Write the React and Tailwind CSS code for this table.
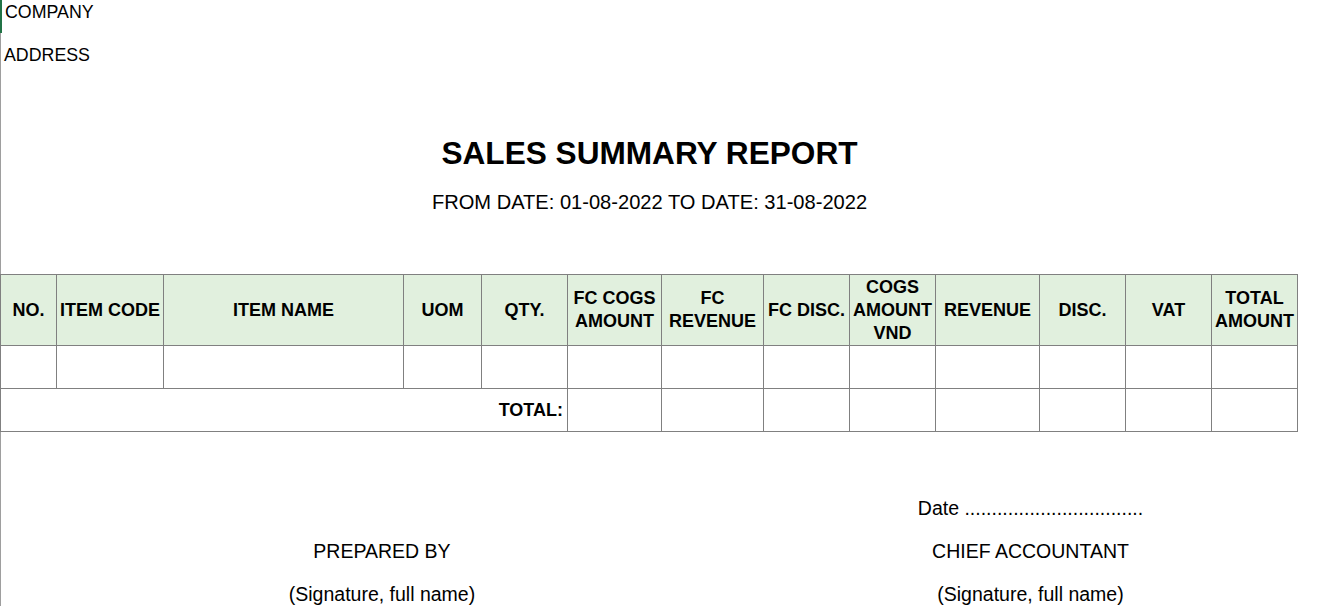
import React from 'react';

const cols = [
  { label: 'NO.' },
  { label: 'ITEM CODE' },
  { label: 'ITEM NAME' },
  { label: 'UOM' },
  { label: 'QTY.' },
  { label: 'FC COGS AMOUNT' },
  { label: 'FC REVENUE' },
  { label: 'FC DISC.' },
  { label: 'COGS AMOUNT VND' },
  { label: 'REVENUE' },
  { label: 'DISC.' },
  { label: 'VAT' },
  { label: 'TOTAL AMOUNT' },
];

const App = () => {
  return (
    <div
      className="min-h-screen w-full bg-white text-black text-[17.8px]"
      style={{ fontFamily: '"Liberation Sans", Arial, sans-serif' }}
    >
      {/* Company row (selected cell marker) */}
      <div className="h-[33px] border-l-2 border-[#217346] pl-[3px] leading-[24px]">COMPANY</div>

      <div className="border-l border-[#9e9e9e] w-[1298px]">
        <div className="pl-[3px] pt-[10px] leading-[24px]">ADDRESS</div>

        {/* Title */}
        <div className="mt-[68px] text-center font-bold text-[31.6px] leading-[36px]">SALES SUMMARY REPORT</div>
        <div className="mt-[19px] text-center text-[20.1px] leading-[24px]">
          FROM DATE: 01-08-2022 TO DATE: 31-08-2022
        </div>

        {/* Table */}
        <div className="mt-[60px] -ml-px grid grid-cols-[56px_107px_240px_78px_86px_94px_102px_86px_86px_104px_86px_86px_86px] border-l border-t border-[#808080]">
          {cols.map((c) => (
            <div
              key={c.label}
              className="h-[71px] bg-[#e1f0de] border-r border-b border-[#808080] flex items-center justify-center text-center font-bold text-[18px] leading-[23px]"
            >
              {c.label}
            </div>
          ))}
          {cols.map((c) => (
            <div key={'r' + c.label} className="h-[43px] border-r border-b border-[#808080]" />
          ))}
          <div className="col-span-5 h-[43px] border-r border-b border-[#808080] flex items-center justify-end pr-[4px] font-bold text-[18px]">
            TOTAL:
          </div>
          {cols.slice(5).map((c) => (
            <div key={'t' + c.label} className="h-[43px] border-r border-b border-[#808080]" />
          ))}
        </div>

        {/* Signatures */}
        <div className="grid grid-cols-[764px_533px] -ml-px text-[19.5px]">
          <div className="flex flex-col items-center pt-[107px]">
            <div className="leading-[24px]">PREPARED BY</div>
            <div className="mt-[19px] leading-[24px]">(Signature, full name)</div>
          </div>
          <div className="flex flex-col items-center pt-[64px]">
            <div className="leading-[24px]">Date .................................</div>
            <div className="mt-[19px] leading-[24px]">CHIEF ACCOUNTANT</div>
            <div className="mt-[19px] leading-[24px]">(Signature, full name)</div>
          </div>
        </div>
      </div>
    </div>
  );
};

export default App;
